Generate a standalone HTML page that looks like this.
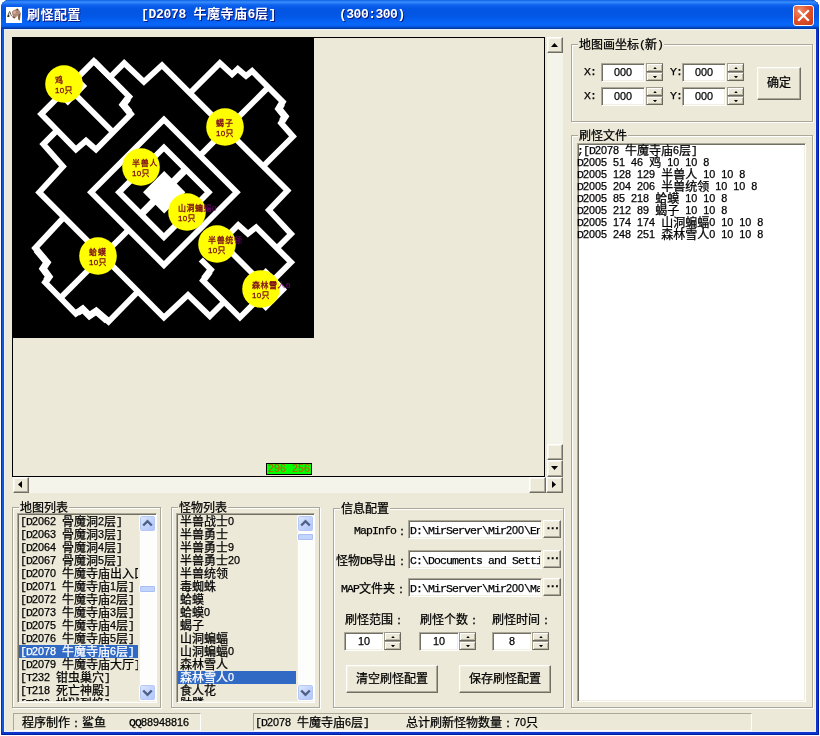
<!DOCTYPE html>
<html lang="zh"><head><meta charset="utf-8"><title>刷怪配置</title>
<style>
*{box-sizing:border-box;margin:0;padding:0}
html,body{width:820px;height:736px;overflow:hidden;background:#fff}
body{position:relative;font:12px/13px "Liberation Mono","Noto Sans CJK SC",monospace;color:#000;-webkit-text-stroke:0.25px currentColor}
i{font-style:normal;font-size:11.5px;letter-spacing:-0.9px;white-space:pre;position:relative;top:-1px;line-height:0}
.a{position:absolute}
.t{position:absolute;white-space:pre;line-height:13px;height:13px}
#win{left:1px;top:0;width:818px;height:735px;background:#1455dc;box-shadow:inset 1px 0 0 #0831b0,inset -1px 0 0 #001ea0,inset 0 -1px 0 #001ea0,inset -3px 0 0 #0a34cc,inset 0 -3px 0 #0a34cc;border-radius:8px 8px 0 0;overflow:hidden}
#tb{left:0;top:0;width:818px;height:29px;background:linear-gradient(180deg,#0a5fe8 0,#3a8cf8 2px,#2a80f6 3px,#0f62ee 5px,#0458e6 8px,#0355e2 12px,#0358e8 17px,#0560f2 21px,#0766fa 24px,#0660f0 26px,#0450d2 27px,#033fb0 28px,#023296 29px)}
#body{left:3px;top:29px;width:812px;height:703px;background:#ece9d8;border:1px solid #e8f1ff}
#title{left:26px;top:7px;font:bold 13px/16px "Liberation Sans","Noto Sans CJK SC",sans-serif;color:#fff;white-space:pre;text-shadow:1px 1px 0 #0a1883;-webkit-text-stroke:0}
.gb{position:absolute;border:1px solid #aca899;box-shadow:inset 1px 1px 0 #fff,1px 1px 0 #fff}
.gl{position:absolute;background:#ece9d8;white-space:pre;height:11px;line-height:13px;padding:0 1px}
.sunk{position:absolute;background:#fff;border:1px solid;border-color:#aca899 #fff #fff #aca899;box-shadow:inset 1px 1px 0 #716f64,inset -1px -1px 0 #f1efe2}
.btn{position:absolute;background:#ece9d8;border:1px solid;border-color:#fff #716f64 #716f64 #fff;box-shadow:inset -1px -1px 0 #aca899,inset 1px 1px 0 #f1efe2;text-align:center}
.sb{position:absolute;background:#ece9d8;border:1px solid;border-color:#fff #716f64 #716f64 #fff;box-shadow:inset -1px -1px 0 #aca899,inset 1px 1px 0 #f6f5ee}
.spb{position:absolute;width:17px;height:9px;background:#ece9d8;border:1px solid;border-color:#a09d8e #6b695e #6b695e #a09d8e;box-shadow:inset 1px 1px 0 #fff,inset -1px -1px 0 #bab7a6}
.trk{position:absolute;background:#f5f4ea}
.sp{position:absolute;left:6px;top:8px;width:0;height:0;border:3px solid transparent}
.st{position:absolute;border:1px solid;border-color:#aca899 #fff #fff #aca899;height:18px}
.xsb{position:absolute;background:#fdfdfb;border-left:1px solid #eeede5}
.xb{position:absolute;width:17px;height:17px;border-radius:3px;background:linear-gradient(135deg,#e1eafe,#c3d3fd 50%,#b0c4f8);border:1px solid #fff;box-shadow:0 0 0 1px #b4c8f6 inset}
.xt{position:absolute;width:17px;border-radius:2px;background:#c4d5fd;border:1px solid #fff;box-shadow:0 0 0 1px #a8bef6 inset}
.sel{position:absolute;background:#316ac5;height:13px}
.w{color:#fff}
u{text-decoration:none;font-family:"Liberation Sans",sans-serif;font-size:10.8px;letter-spacing:0}
b{font-weight:bold;font-family:"Liberation Mono","WenQuanYi Zen Hei",monospace}
#root{position:absolute;left:0;top:0;width:820px;height:736px;will-change:transform}
</style></head>
<body>
<div id="root"><div id="win" class="a">
<div id="tb" class="a"></div>
<svg class="a" style="left:5px;top:7px" width="16" height="16" viewBox="0 0 16 16"><rect width="16" height="16" fill="#fff"/><path d="M1.4 10l1-2.6 1.2-3 1.3 3.2" fill="none" stroke="#5a5648" stroke-width="1"/><path d="M1.8 8.2l1.2-1 .6 2.2-1.4.8z" fill="#2e2c22"/><path d="M6 4.6l2-1.6 3-1.3 2.5 1.8 1.5 3-.6 3.4-.5 3.8-1.6-1.6-.8-3.6-1.5 2-1.8 1-1.1-2-1-2.6z" fill="#b08c78"/><path d="M10.3 2l1.2-.6 1.2 1.6-1.4.6z" fill="#4a3a34"/><path d="M12.6 7.5l1.4-.6-.2 3.6-.3 3-1.4-1.6z" fill="#6e5a3c"/><path d="M7 5l2.2-1.2.8 1.8-1.8 1.6z" fill="#dcb4a4"/><path d="M6.3 9.2l1.6.4 1.2 1.2-.8.8-1.4-.8z" fill="#7a4a48"/><path d="M4.6 7.6l1.6 1.8" stroke="#6a5048" stroke-width=".8"/></svg>
<div id="title" class="a" style="letter-spacing:0.5px">刷怪配置</div>
<div class="a" style="left:140px;top:7px;font:bold 13px/16px 'Liberation Mono','Noto Sans CJK SC',monospace;color:#fff;white-space:pre;text-shadow:1px 1px 0 #0a1883;-webkit-text-stroke:0"><span style="letter-spacing:-0.3px">[D2078 </span><span style="letter-spacing:0.5px">牛魔寺庙</span><span style="letter-spacing:-0.3px">6</span><span style="letter-spacing:0.5px">层</span><span style="letter-spacing:-0.3px">]</span></div>
<div class="a" style="left:338px;top:7px;font:bold 13px/16px 'Liberation Mono','Noto Sans CJK SC',monospace;color:#fff;white-space:pre;text-shadow:1px 1px 0 #0a1883;-webkit-text-stroke:0;letter-spacing:-0.5px">(300:300)</div>
<div class="a" style="left:792px;top:5px;width:21px;height:21px;border-radius:3px;border:1px solid #fff;background:radial-gradient(circle at 30% 25%,#f09070 0,#e0532c 45%,#c6391a 100%)"></div>
<svg class="a" style="left:792px;top:5px" width="21" height="21" viewBox="0 0 21 21"><path d="M6 6l9 9M15 6l-9 9" stroke="#fff" stroke-width="2.2" stroke-linecap="square"/></svg>
<div id="body" class="a"></div>
</div>
<div class="a" style="left:12px;top:37px;width:533px;height:440px;border:1px solid #000;background:#ece9d8"></div>
<svg class="a" style="left:13px;top:38px" width="301" height="300" viewBox="13 38 301 300" font-family="'Liberation Sans','Noto Sans CJK SC',sans-serif">
<rect x="13" y="38" width="301" height="300" fill="#000"/>
<polygon points="67.8,66.7 87.2,86.1 67.8,105.5 48.4,86.1" fill="#fff"/>
<polygon points="265.7,268.1 287.1,289.5 265.7,310.9 244.3,289.5" fill="#fff"/>
<g fill="none" stroke="#fff" stroke-width="5.8" stroke-linejoin="miter" stroke-miterlimit="10">
<path d="M93.9 61.1 L110.0 77.2 L124.2 63.1 L143.9 81.8 L162.0 65.2 L287.5 190.5 L268.9 210.1 L291.1 234.0 L275.8 249.3" />
<path d="M93.9 61.1 L41.2 114.1 L75.9 149.5 L86.0 140.7 L96.0 149.5 L131.0 114.1 L123.1 104.6 L129.3 96.7 L110.0 77.2 Z" />
<path d="M72.0 91.2 L114.1 133.3" />
<path d="M58.3 129.1 L43.3 144.1 L63.0 166.5 L39.2 192.3 L163.9 317.5 L188.0 295.0 L209.8 316.2 L225.3 300.7" />
<path d="M65.0 216.1 L35.1 248.2 L47.1 262.5 L43.0 268.6 L49.0 276.7 L45.0 282.2 L75.9 313.7 L82.7 309.1 L89.4 315.7 L96.2 311.1 L108.5 321.8 L139.0 290.4" />
<path d="M61.0 297.4 L129.7 228.7" />
<path d="M189.0 94.0 L219.9 63.1 L232.1 74.4 L237.8 69.0 L246.0 76.0 L252.1 71.0 L282.9 101.9 L278.8 108.7 L285.1 116.5 L281.0 122.9 L293.0 136.5 L262.2 167.3" />
<path d="M267.1 88.4 L198.9 156.6" />
<path d="M225.0 238.2 L238.2 225.0 L247.9 233.7 L256.1 227.3 L291.1 262.3 L268.0 285.4" />
<path d="M228.0 249.0 L255.0 276.0" />
<path d="M200.8 259.5 L211.0 269.7 L202.9 280.5 L239.9 317.5 L262.0 295.4" />
<path d="M163.9 119.5 L236.7 192.3 L163.9 265.1 L91.1 192.3 Z" />
</g>
<g fill="none" stroke="#fff" stroke-width="7" stroke-linejoin="miter">
<path d="M281.9 103.6 L278.8 108.7 L285.1 116.5 L282.1 121.2" />
<path d="M36.4 249.7 L47.1 262.5 L43.0 268.6 L49.0 276.7 L46.2 280.6" />
<path d="M129.7 112.6 L123.1 104.6 L128.1 98.3" />
<path d="M209.8 271.3 L204.1 278.9" />
<path d="M77.6 312.6 L82.7 309.1 L89.4 315.7 L96.2 311.1 L107.0 320.5" />
</g>
<path d="M163.9 147.5 L208.7 192.3 L163.9 237.1 L119.1 192.3 Z" fill="none" stroke="#fff" stroke-width="5.8"/>
<polygon points="164.2,171.1 185.4,192.3 164.2,213.5 143.0,192.3" fill="#fff"/>
<path d="M185.8 169.4 L141.0 214.2" stroke="#fff" stroke-width="7.2"/>
<defs>
<clipPath id="c0"><circle cx="64" cy="84" r="18.8"/></clipPath>
<clipPath id="c1"><circle cx="225" cy="127" r="18.8"/></clipPath>
<clipPath id="c2"><circle cx="141" cy="167" r="18.8"/></clipPath>
<clipPath id="c3"><circle cx="187" cy="212" r="18.8"/></clipPath>
<clipPath id="c4"><circle cx="217" cy="244" r="18.8"/></clipPath>
<clipPath id="c5"><circle cx="98" cy="256" r="18.8"/></clipPath>
<clipPath id="c6"><circle cx="261" cy="289" r="18.8"/></clipPath>
</defs>
<text x="55" y="83" font-size="8" fill="#800080" textLength="8.5" lengthAdjust="spacing">鸡</text>
<text x="216" y="126" font-size="8" fill="#800080" textLength="17.0" lengthAdjust="spacing">蝎子</text>
<text x="132" y="166" font-size="8" fill="#800080" textLength="25.5" lengthAdjust="spacing">半兽人</text>
<text x="178" y="211" font-size="8" fill="#800080" textLength="38.5" lengthAdjust="spacing">山洞蝙蝠0</text>
<text x="208" y="243" font-size="8" fill="#800080" textLength="34.0" lengthAdjust="spacing">半兽统领</text>
<text x="89" y="255" font-size="8" fill="#800080" textLength="17.0" lengthAdjust="spacing">蛤蟆</text>
<text x="252" y="288" font-size="8" fill="#800080" textLength="38.5" lengthAdjust="spacing">森林雪人0</text>
<circle cx="64" cy="84" r="18.8" fill="#ffff00"/>
<circle cx="225" cy="127" r="18.8" fill="#ffff00"/>
<circle cx="141" cy="167" r="18.8" fill="#ffff00"/>
<circle cx="187" cy="212" r="18.8" fill="#ffff00"/>
<circle cx="217" cy="244" r="18.8" fill="#ffff00"/>
<circle cx="98" cy="256" r="18.8" fill="#ffff00"/>
<circle cx="261" cy="289" r="18.8" fill="#ffff00"/>
<g clip-path="url(#c0)" fill="#7a0a1c" stroke="#7a0a1c" stroke-width=".3" font-size="8"><text x="55" y="83" textLength="8.5" lengthAdjust="spacing">鸡</text><text x="55" y="93" textLength="17.5" lengthAdjust="spacing">10只</text></g>
<g clip-path="url(#c1)" fill="#7a0a1c" stroke="#7a0a1c" stroke-width=".3" font-size="8"><text x="216" y="126" textLength="17.0" lengthAdjust="spacing">蝎子</text><text x="216" y="136" textLength="17.5" lengthAdjust="spacing">10只</text></g>
<g clip-path="url(#c2)" fill="#7a0a1c" stroke="#7a0a1c" stroke-width=".3" font-size="8"><text x="132" y="166" textLength="25.5" lengthAdjust="spacing">半兽人</text><text x="132" y="176" textLength="17.5" lengthAdjust="spacing">10只</text></g>
<g clip-path="url(#c3)" fill="#7a0a1c" stroke="#7a0a1c" stroke-width=".3" font-size="8"><text x="178" y="211" textLength="38.5" lengthAdjust="spacing">山洞蝙蝠0</text><text x="178" y="221" textLength="17.5" lengthAdjust="spacing">10只</text></g>
<g clip-path="url(#c4)" fill="#7a0a1c" stroke="#7a0a1c" stroke-width=".3" font-size="8"><text x="208" y="243" textLength="34.0" lengthAdjust="spacing">半兽统领</text><text x="208" y="253" textLength="17.5" lengthAdjust="spacing">10只</text></g>
<g clip-path="url(#c5)" fill="#7a0a1c" stroke="#7a0a1c" stroke-width=".3" font-size="8"><text x="89" y="255" textLength="17.0" lengthAdjust="spacing">蛤蟆</text><text x="89" y="265" textLength="17.5" lengthAdjust="spacing">10只</text></g>
<g clip-path="url(#c6)" fill="#7a0a1c" stroke="#7a0a1c" stroke-width=".3" font-size="8"><text x="252" y="288" textLength="38.5" lengthAdjust="spacing">森林雪人0</text><text x="252" y="298" textLength="17.5" lengthAdjust="spacing">10只</text></g>
</svg>
<div class="a" style="left:266px;top:463px;width:46px;height:12px;background:#00ff00;border:1px solid #000"></div>
<div class="t" style="left:268px;top:464px;color:#c85000;-webkit-text-stroke:0"><i><u>296</u> <u>256</u></i></div>
<div class="trk" style="left:547px;top:37px;width:16px;height:440px"></div>
<div class="sb" style="left:547px;top:37px;width:16px;height:16px"></div>
<svg class="a" style="left:551px;top:43px" width="7" height="4"><polygon points="0,4 3.5,0 7,4" fill="#000"/></svg>
<div class="sb" style="left:547px;top:444px;width:16px;height:16px"></div>
<div class="sb" style="left:547px;top:460px;width:16px;height:17px"></div>
<svg class="a" style="left:551px;top:466px" width="7" height="4"><polygon points="0,0 7,0 3.5,4" fill="#000"/></svg>
<div class="trk" style="left:13px;top:477px;width:534px;height:16px"></div>
<div class="sb" style="left:13px;top:477px;width:16px;height:16px"></div>
<svg class="a" style="left:18px;top:481px" width="4" height="7"><polygon points="4,0 4,7 0,3.5" fill="#000"/></svg>
<div class="sb" style="left:529px;top:477px;width:17px;height:16px"></div>
<div class="sb" style="left:546px;top:477px;width:17px;height:16px"></div>
<svg class="a" style="left:552px;top:481px" width="4" height="7"><polygon points="0,0 4,3.5 0,7" fill="#000"/></svg>
<div class="gb" style="left:571px;top:44px;width:242px;height:78px"></div>
<div class="gl" style="left:578px;top:40px">地图画坐标<i>(</i>新<i>)</i></div>
<div class="t " style="left:584px;top:67px;"><i>X:</i></div>
<div class="sunk" style="left:601px;top:63px;width:44px;height:19px"></div>
<div class="t " style="left:614px;top:68px;"><i><u>000</u></i></div>
<div class="spb" style="left:646px;top:63px"></div>
<div class="spb" style="left:646px;top:72px"></div>
<svg class="a" style="left:652.5px;top:67px" width="4" height="2.3"><polygon points="0,2.3 2,0 4,2.3" fill="#000"/></svg>
<svg class="a" style="left:652.5px;top:75.5px" width="4" height="2.3"><polygon points="0,0 4,0 2,2.3" fill="#000"/></svg>
<div class="t " style="left:670px;top:67px;"><i>Y:</i></div>
<div class="sunk" style="left:682px;top:63px;width:44px;height:19px"></div>
<div class="t " style="left:695px;top:68px;"><i><u>000</u></i></div>
<div class="spb" style="left:727px;top:63px"></div>
<div class="spb" style="left:727px;top:72px"></div>
<svg class="a" style="left:733.5px;top:67px" width="4" height="2.3"><polygon points="0,2.3 2,0 4,2.3" fill="#000"/></svg>
<svg class="a" style="left:733.5px;top:75.5px" width="4" height="2.3"><polygon points="0,0 4,0 2,2.3" fill="#000"/></svg>
<div class="t " style="left:584px;top:91px;"><i>X:</i></div>
<div class="sunk" style="left:601px;top:87px;width:44px;height:19px"></div>
<div class="t " style="left:614px;top:92px;"><i><u>000</u></i></div>
<div class="spb" style="left:646px;top:87px"></div>
<div class="spb" style="left:646px;top:96px"></div>
<svg class="a" style="left:652.5px;top:91px" width="4" height="2.3"><polygon points="0,2.3 2,0 4,2.3" fill="#000"/></svg>
<svg class="a" style="left:652.5px;top:99.5px" width="4" height="2.3"><polygon points="0,0 4,0 2,2.3" fill="#000"/></svg>
<div class="t " style="left:670px;top:91px;"><i>Y:</i></div>
<div class="sunk" style="left:682px;top:87px;width:44px;height:19px"></div>
<div class="t " style="left:695px;top:92px;"><i><u>000</u></i></div>
<div class="spb" style="left:727px;top:87px"></div>
<div class="spb" style="left:727px;top:96px"></div>
<svg class="a" style="left:733.5px;top:91px" width="4" height="2.3"><polygon points="0,2.3 2,0 4,2.3" fill="#000"/></svg>
<svg class="a" style="left:733.5px;top:99.5px" width="4" height="2.3"><polygon points="0,0 4,0 2,2.3" fill="#000"/></svg>
<div class="btn" style="left:757px;top:67px;width:44px;height:33px"></div>
<div class="t " style="left:767px;top:78px;">确定</div>
<div class="gb" style="left:571px;top:135px;width:242px;height:573px"></div>
<div class="gl" style="left:578px;top:131px">刷怪文件</div>
<div class="sunk" style="left:577px;top:143px;width:229px;height:559px"></div>
<div class="t " style="left:577px;top:146px;"><i>;[D<u>2078</u> </i>牛魔寺庙<i><u>6</u></i>层<i>]</i></div>
<div class="t " style="left:577px;top:158px;"><i>D<u>2005</u> <u>51</u> <u>46</u> </i>鸡<i> <u>10</u> <u>10</u> <u>8</u></i></div>
<div class="t " style="left:577px;top:170px;"><i>D<u>2005</u> <u>128</u> <u>129</u> </i>半兽人<i> <u>10</u> <u>10</u> <u>8</u></i></div>
<div class="t " style="left:577px;top:182px;"><i>D<u>2005</u> <u>204</u> <u>206</u> </i>半兽统领<i> <u>10</u> <u>10</u> <u>8</u></i></div>
<div class="t " style="left:577px;top:194px;"><i>D<u>2005</u> <u>85</u> <u>218</u> </i>蛤蟆<i> <u>10</u> <u>10</u> <u>8</u></i></div>
<div class="t " style="left:577px;top:206px;"><i>D<u>2005</u> <u>212</u> <u>89</u> </i>蝎子<i> <u>10</u> <u>10</u> <u>8</u></i></div>
<div class="t " style="left:577px;top:218px;"><i>D<u>2005</u> <u>174</u> <u>174</u> </i>山洞蝙蝠<i><u>0</u> <u>10</u> <u>10</u> <u>8</u></i></div>
<div class="t " style="left:577px;top:230px;"><i>D<u>2005</u> <u>248</u> <u>251</u> </i>森林雪人<i><u>0</u> <u>10</u> <u>10</u> <u>8</u></i></div>
<div class="gb" style="left:12px;top:507px;width:149px;height:201px"></div>
<div class="gl" style="left:19px;top:503px">地图列表</div>
<div class="sunk" style="left:17px;top:513px;width:140px;height:190px;background:#ece9d8"></div>
<div class="a" style="left:19px;top:515px;width:119px;height:186px;overflow:hidden"><div class="a" style="left:0;top:2px">
<div class="t " style="left:1px;top:0px"><i>[D<u>2062</u> </i>骨魔洞<i><u>2</u></i>层<i>]</i></div>
<div class="t " style="left:1px;top:13px"><i>[D<u>2063</u> </i>骨魔洞<i><u>3</u></i>层<i>]</i></div>
<div class="t " style="left:1px;top:26px"><i>[D<u>2064</u> </i>骨魔洞<i><u>4</u></i>层<i>]</i></div>
<div class="t " style="left:1px;top:39px"><i>[D<u>2067</u> </i>骨魔洞<i><u>5</u></i>层<i>]</i></div>
<div class="t " style="left:1px;top:52px"><i>[D<u>2070</u> </i>牛魔寺庙出入口<i>]</i></div>
<div class="t " style="left:1px;top:65px"><i>[D<u>2071</u> </i>牛魔寺庙<i><u>1</u></i>层<i>]</i></div>
<div class="t " style="left:1px;top:78px"><i>[D<u>2072</u> </i>牛魔寺庙<i><u>2</u></i>层<i>]</i></div>
<div class="t " style="left:1px;top:91px"><i>[D<u>2073</u> </i>牛魔寺庙<i><u>3</u></i>层<i>]</i></div>
<div class="t " style="left:1px;top:104px"><i>[D<u>2075</u> </i>牛魔寺庙<i><u>4</u></i>层<i>]</i></div>
<div class="t " style="left:1px;top:117px"><i>[D<u>2076</u> </i>牛魔寺庙<i><u>5</u></i>层<i>]</i></div>
<div class="sel" style="left:0;top:128px;width:120px"></div>
<div class="t w" style="left:1px;top:130px"><i>[D<u>2078</u> </i>牛魔寺庙<i><u>6</u></i>层<i>]</i></div>
<div class="t " style="left:1px;top:143px"><i>[D<u>2079</u> </i>牛魔寺庙大厅<i>]</i></div>
<div class="t " style="left:1px;top:156px"><i>[T<u>232</u> </i>钳虫巢穴<i>]</i></div>
<div class="t " style="left:1px;top:169px"><i>[T<u>218</u> </i>死亡神殿<i>]</i></div>
<div class="t " style="left:1px;top:182px"><i>[T<u>220</u> </i>地狱烈焰<i>]</i></div>
</div></div>
<div class="xsb" style="left:139px;top:515px;width:17px;height:186px"></div>
<div class="xb" style="left:139px;top:515px"></div>
<div class="xb" style="left:139px;top:684px"></div>
<svg class="a" style="left:139px;top:515px" width="17" height="17" viewBox="0 0 17 17"><path d="M4.2 10.5l4.3-4.3 4.3 4.3" fill="none" stroke="#4d6185" stroke-width="2.4"/></svg>
<svg class="a" style="left:139px;top:684px" width="17" height="17" viewBox="0 0 17 17"><path d="M4.2 6.5l4.3 4.3 4.3-4.3" fill="none" stroke="#4d6185" stroke-width="2.4"/></svg>
<div class="xt" style="left:139px;top:585px;height:8px"></div>
<div class="gb" style="left:171px;top:507px;width:149px;height:201px"></div>
<div class="gl" style="left:178px;top:503px">怪物列表</div>
<div class="sunk" style="left:176px;top:513px;width:139px;height:190px;background:#ece9d8"></div>
<div class="a" style="left:178px;top:515px;width:119px;height:186px;overflow:hidden"><div class="a" style="left:0;top:2px">
<div class="t " style="left:2px;top:0px">半兽战士<i><u>0</u></i></div>
<div class="t " style="left:2px;top:13px">半兽勇士</div>
<div class="t " style="left:2px;top:26px">半兽勇士<i><u>9</u></i></div>
<div class="t " style="left:2px;top:39px">半兽勇士<i><u>20</u></i></div>
<div class="t " style="left:2px;top:52px">半兽统领</div>
<div class="t " style="left:2px;top:65px">毒蜘蛛</div>
<div class="t " style="left:2px;top:78px">蛤蟆</div>
<div class="t " style="left:2px;top:91px">蛤蟆<i><u>0</u></i></div>
<div class="t " style="left:2px;top:104px">蝎子</div>
<div class="t " style="left:2px;top:117px">山洞蝙蝠</div>
<div class="t " style="left:2px;top:130px">山洞蝙蝠<i><u>0</u></i></div>
<div class="t " style="left:2px;top:143px">森林雪人</div>
<div class="sel" style="left:0;top:154px;width:118px"></div>
<div class="t w" style="left:2px;top:156px">森林雪人<i><u>0</u></i></div>
<div class="t " style="left:2px;top:169px">食人花</div>
<div class="t " style="left:2px;top:182px">骷髅</div>
</div></div>
<div class="xsb" style="left:297px;top:515px;width:17px;height:186px"></div>
<div class="xb" style="left:297px;top:515px"></div>
<div class="xb" style="left:297px;top:684px"></div>
<svg class="a" style="left:297px;top:515px" width="17" height="17" viewBox="0 0 17 17"><path d="M4.2 10.5l4.3-4.3 4.3 4.3" fill="none" stroke="#4d6185" stroke-width="2.4"/></svg>
<svg class="a" style="left:297px;top:684px" width="17" height="17" viewBox="0 0 17 17"><path d="M4.2 6.5l4.3 4.3 4.3-4.3" fill="none" stroke="#4d6185" stroke-width="2.4"/></svg>
<div class="xt" style="left:297px;top:533px;height:8px"></div>
<div class="gb" style="left:333px;top:508px;width:231px;height:200px"></div>
<div class="gl" style="left:340px;top:504px">信息配置</div>
<div class="t " style="left:354px;top:526px;"><i>MapInfo</i><b>：</b></div>
<div class="sunk" style="left:408px;top:520px;width:134px;height:19px"></div>
<div class="a" style="left:410px;top:522px;width:130px;height:15px;overflow:hidden"><div class="t" style="left:0;top:4px"><i>D:\MirServer\Mir<u>200</u>\Envir\</i></div></div>
<div class="btn" style="left:543px;top:520px;width:18px;height:18px"></div>
<div class="t" style="left:545px;top:521px;font-weight:bold"><i style="letter-spacing:-2.7px">...</i></div>
<div class="t " style="left:336px;top:556px;">怪物<i>DB</i>导出<b>：</b></div>
<div class="sunk" style="left:408px;top:550px;width:134px;height:19px"></div>
<div class="a" style="left:410px;top:552px;width:130px;height:15px;overflow:hidden"><div class="t" style="left:0;top:4px"><i>C:\Documents and Settings</i></div></div>
<div class="btn" style="left:543px;top:550px;width:18px;height:18px"></div>
<div class="t" style="left:545px;top:551px;font-weight:bold"><i style="letter-spacing:-2.7px">...</i></div>
<div class="t " style="left:341px;top:584px;"><i>MAP</i>文件夹<b>：</b></div>
<div class="sunk" style="left:408px;top:578px;width:134px;height:19px"></div>
<div class="a" style="left:410px;top:580px;width:130px;height:15px;overflow:hidden"><div class="t" style="left:0;top:4px"><i>D:\MirServer\Mir<u>200</u>\Map\</i></div></div>
<div class="btn" style="left:543px;top:578px;width:18px;height:18px"></div>
<div class="t" style="left:545px;top:579px;font-weight:bold"><i style="letter-spacing:-2.7px">...</i></div>
<div class="t " style="left:345px;top:615px;">刷怪范围<b>：</b></div>
<div class="sunk" style="left:344px;top:632px;width:40px;height:19px"></div>
<div class="t " style="left:358px;top:637px;"><i><u>10</u></i></div>
<div class="spb" style="left:384px;top:632px"></div>
<div class="spb" style="left:384px;top:641px"></div>
<svg class="a" style="left:390.5px;top:636px" width="4" height="2.3"><polygon points="0,2.3 2,0 4,2.3" fill="#000"/></svg>
<svg class="a" style="left:390.5px;top:644.5px" width="4" height="2.3"><polygon points="0,0 4,0 2,2.3" fill="#000"/></svg>
<div class="t " style="left:420px;top:615px;">刷怪个数<b>：</b></div>
<div class="sunk" style="left:419px;top:632px;width:40px;height:19px"></div>
<div class="t " style="left:433px;top:637px;"><i><u>10</u></i></div>
<div class="spb" style="left:459px;top:632px"></div>
<div class="spb" style="left:459px;top:641px"></div>
<svg class="a" style="left:465.5px;top:636px" width="4" height="2.3"><polygon points="0,2.3 2,0 4,2.3" fill="#000"/></svg>
<svg class="a" style="left:465.5px;top:644.5px" width="4" height="2.3"><polygon points="0,0 4,0 2,2.3" fill="#000"/></svg>
<div class="t " style="left:492px;top:615px;">刷怪时间<b>：</b></div>
<div class="sunk" style="left:492px;top:632px;width:40px;height:19px"></div>
<div class="t " style="left:509px;top:637px;"><i><u>8</u></i></div>
<div class="spb" style="left:532px;top:632px"></div>
<div class="spb" style="left:532px;top:641px"></div>
<svg class="a" style="left:538.5px;top:636px" width="4" height="2.3"><polygon points="0,2.3 2,0 4,2.3" fill="#000"/></svg>
<svg class="a" style="left:538.5px;top:644.5px" width="4" height="2.3"><polygon points="0,0 4,0 2,2.3" fill="#000"/></svg>
<div class="btn" style="left:346px;top:665px;width:92px;height:28px"></div>
<div class="t " style="left:356px;top:674px;">清空刷怪配置</div>
<div class="btn" style="left:459px;top:665px;width:92px;height:28px"></div>
<div class="t " style="left:469px;top:674px;">保存刷怪配置</div>
<div class="st" style="left:13px;top:713px;width:188px"></div>
<div class="t " style="left:22px;top:718px;">程序制作<b>：</b>鲨鱼</div>
<div class="t " style="left:129px;top:718px;"><i>QQ<u>88948816</u></i></div>
<div class="st" style="left:253px;top:713px;width:499px"></div>
<div class="t " style="left:255px;top:718px;"><i>[D<u>2078</u> </i>牛魔寺庙<i><u>6</u></i>层<i>]</i></div>
<div class="t " style="left:406px;top:718px;">总计刷新怪物数量<b>：</b><i><u>70</u></i>只</div></div>
</body></html>
